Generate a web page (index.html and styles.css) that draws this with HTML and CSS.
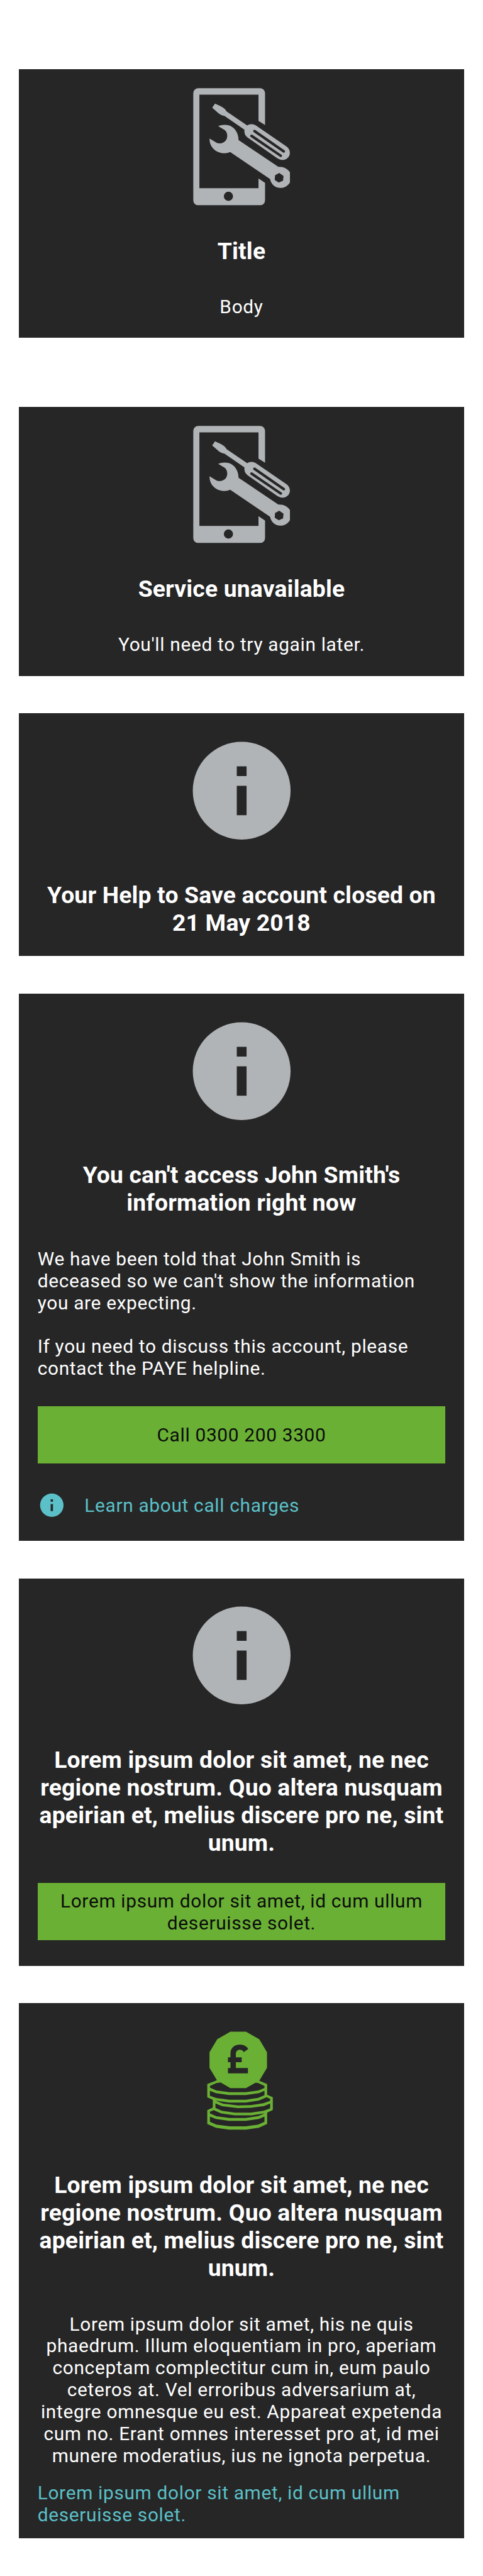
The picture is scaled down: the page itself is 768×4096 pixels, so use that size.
FILE: index.html
```html
<!DOCTYPE html>
<html lang="en">
<head>
<meta charset="utf-8">
<title>Status cards</title>
<link rel="stylesheet" href="styles.css">
</head>
<body>
<svg class="sprite" aria-hidden="true">
  <symbol id="info" viewBox="0 0 24 24">
    <path fill-rule="evenodd" d="M12 2a10 10 0 1 0 0 20 10 10 0 0 0 0-20ZM11 7h2v2h-2ZM11 11h2v6h-2Z"/>
  </symbol>
  <symbol id="tools" viewBox="26 81 788 788">
    <path fill-rule="evenodd" d="M129 82H543a34 34 0 0 1 34 34V329L533 302V125H136V754H533V688L577 718V835a34 34 0 0 1-34 34H129a34 34 0 0 1-34-34V116a34 34 0 0 1 34-34ZM331 777a31 31 0 1 0 0 62 31 31 0 0 0 0-62Z"/>
    <path fill-rule="evenodd" d="M241 186L280 204C297 213 311 224 319 238L457 332C474 322 495 321 514 331L720 473C740 487 746 509 743 524C738 553 709 568 681 562Q671 560 660 553L459 413C442 399 436 381 439 361L304 268C289 266 275 259 264 250L222 213ZM513 364A9 9 0 0 0 500 377L698 514A9 9 0 0 0 709 500ZM491 395A9 9 0 0 0 479 408L679 544A9 9 0 0 0 690 531Z"/>
    <path fill-rule="evenodd" d="M262 337C283 327 309 325 333 331C372 342 399 382 399 430L666 610C696 607 727 620 744 646V715C730 740 705 753 680 752C644 751 617 726 611 692L343 511C321 520 297 521 275 515C232 504 203 467 204 420L253 450C277 458 304 449 317 427C328 405 324 377 306 363ZM672 651L644 667L642 699L669 716L698 703L701 671Z"/>
  </symbol>
  <symbol id="coins" viewBox="-33.75 42 787.5 787.5">
    <path fill-rule="evenodd" d="M284 107H389L478 158L530 246V350L478 437L531 459V531L569 548V633L531 651V727L475 752L388 765H275L187 752L129 727V634L166 617V564L129 548V459L194 433L144 350V246L196 158ZM147 471V483L191 502L279 514H386L472 502L513 485V471L470 451L452 450L389 486H284L219 448L190 453ZM147 504V538L190 553L279 564H386L471 552L513 534V504L475 520L388 533H275L187 520ZM184 570L234 590L335 602L422 600L506 588L551 572V558L527 547L475 570L388 583H275ZM184 589V619L227 638L315 651H422L507 638L551 622V590L510 607L422 618L333 620L228 608ZM147 645V656L191 675L279 687H386L471 674L516 655L426 669H313L223 656L172 634ZM147 677V712L190 731L279 743H386L471 731L513 712V677L475 693L388 706H275L187 693Z"/>
    <path class="coin-mark" d="M285 279V252C285 216 312 194 348 194C373 194 395 206 404 223L374 245C370 235 360 229 348 229C331 229 321 240 321 257V279H360V312H321V351H402V387H268V351H285V312H268V279Z"/>
  </symbol>
</svg>

<main class="cards">
  <section class="card card--spaced">
    <svg class="hero"><use href="#tools"/></svg>
    <h2 class="title">Title</h2>
    <p class="body body--center">Body</p>
  </section>

  <section class="card card--spaced">
    <svg class="hero"><use href="#tools"/></svg>
    <h2 class="title">Service unavailable</h2>
    <p class="body body--center">You'll need to try again later.</p>
  </section>

  <section class="card card--short">
    <svg class="hero"><use href="#info"/></svg>
    <h2 class="title">Your Help to Save account closed on<br>21 May 2018</h2>
  </section>

  <section class="card card--help">
    <svg class="hero"><use href="#info"/></svg>
    <h2 class="title">You can't access John Smith's<br>information right now</h2>
    <p class="body">We have been told that John Smith is<br>deceased so we can't show the information<br>you are expecting.<br><br>If you need to discuss this account, please<br>contact the PAYE helpline.</p>
    <a class="button">Call 0300 200 3300</a>
    <a class="link-row"><svg class="link-icon"><use href="#info"/></svg><span>Learn about call charges</span></a>
  </section>

  <section class="card card--action">
    <svg class="hero"><use href="#info"/></svg>
    <h2 class="title">Lorem ipsum dolor sit amet, ne nec<br>regione nostrum. Quo altera nusquam<br>apeirian et, melius discere pro ne, sint<br>unum.</h2>
    <a class="button">Lorem ipsum dolor sit amet, id cum ullum<br>deseruisse solet.</a>
  </section>

  <section class="card card--coins">
    <svg class="hero hero--green"><use href="#coins"/></svg>
    <h2 class="title">Lorem ipsum dolor sit amet, ne nec<br>regione nostrum. Quo altera nusquam<br>apeirian et, melius discere pro ne, sint<br>unum.</h2>
    <p class="body body--center">Lorem ipsum dolor sit amet, his ne quis<br>phaedrum. Illum eloquentiam in pro, aperiam<br>conceptam complectitur cum in, eum paulo<br>ceteros at. Vel erroribus adversarium at,<br>integre omnesque eu est. Appareat expetenda<br>cum no. Erant omnes interesset pro at, id mei<br>munere moderatius, ius ne ignota perpetua.</p>
    <a class="link">Lorem ipsum dolor sit amet, id cum ullum<br>deseruisse solet.</a>
  </section>
</main>
</body>
</html>
```
FILE: styles.css
```css
html {
  /* 1rem = 100 design units on a 1080-unit wide canvas */
  font-size: 71.074px;
  background: #fff;
}

* {
  box-sizing: border-box;
}

body {
  margin: 0;
  font-family: Roboto, sans-serif;
  color: #fff;
}

.sprite {
  display: none;
}

.cards {
  display: flex;
  flex-direction: column;
  gap: 0.84rem;
  height: 4096px;
  padding: 1.55rem 0.42rem 0;
  overflow: hidden;
}

.card {
  display: flex;
  flex: none;
  flex-direction: column;
  align-items: stretch;
  padding: 0.42rem 0.42rem 0;
  background: #262626;
  white-space: nowrap;
}

.card--spaced { height: 6.01rem; }
.card--spaced + .card--spaced { margin-top: 0.71rem; }
.card--short { height: 5.43rem; }
.card--help { height: 12.24rem; }
.card--action { height: 8.67rem; }
.card--coins { height: 11.97rem; }

.hero {
  display: block;
  flex: none;
  align-self: center;
  width: 2.625rem;
  height: 2.625rem;
  fill: #b1b4b6;
}

.hero--green {
  fill: #6ab034;
}

.coin-mark {
  fill: #262626;
}

.title {
  margin: 0.705rem 0 0;
  font-size: 0.525rem;
  font-weight: 700;
  line-height: 0.62rem;
  letter-spacing: 0.0045em;
  text-align: center;
}

.body {
  margin: 0.71rem 0 0;
  font-size: 0.42rem;
  line-height: 0.49rem;
  letter-spacing: 0.0225em;
}

.body--center {
  text-align: center;
}

.button {
  display: flex;
  align-items: center;
  justify-content: center;
  height: 1.28rem;
  margin-top: 0.59rem;
  padding-top: 0.03rem;
  background: #6ab034;
  color: #0b0c0c;
  font-size: 0.42rem;
  line-height: 0.49rem;
  letter-spacing: 0.0225em;
  text-align: center;
}

.link-row {
  display: flex;
  align-items: center;
  gap: 0.42rem;
  height: 0.63rem;
  margin-top: 0.62rem;
  color: #5bc0c8;
  font-size: 0.42rem;
  line-height: 0.49rem;
  letter-spacing: 0.0225em;
}

.link-row span {
  padding-top: 0.04rem;
}

.link-icon {
  width: 0.63rem;
  height: 0.63rem;
  fill: #5bc0c8;
}

.link {
  margin-top: 0.345rem;
  color: #5bc0c8;
  font-size: 0.42rem;
  line-height: 0.49rem;
  letter-spacing: 0.0225em;
}
```
